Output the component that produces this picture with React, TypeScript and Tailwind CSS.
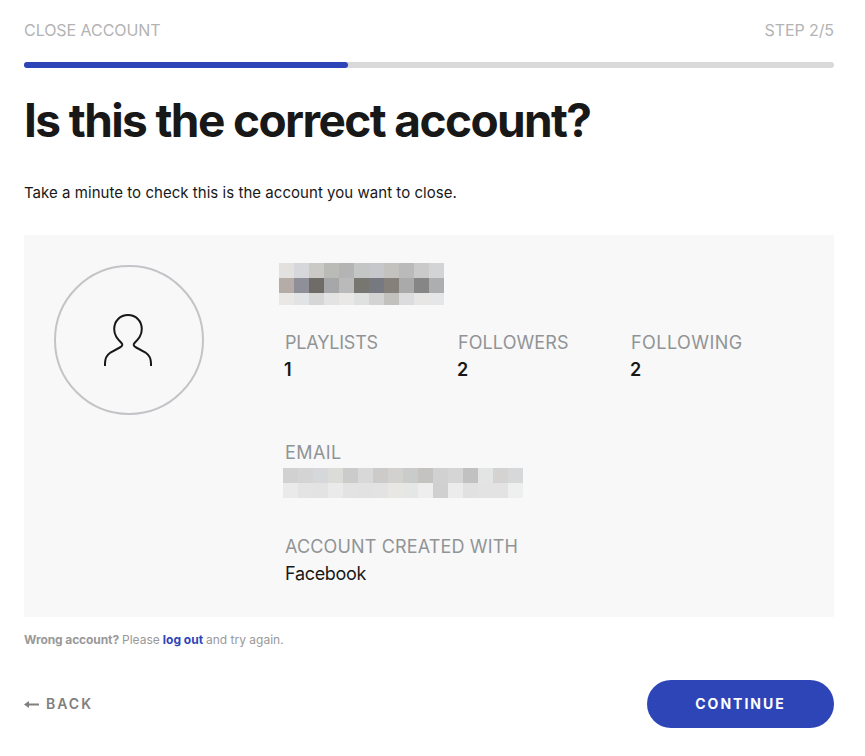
const NAME_ROWS: { height: string; colors: string[] }[] = [
  {
    height: "h-[15px]",
    colors: ["#e2e1df", "#d6d7da", "#cac9c6", "#babab7", "#b4b4b4", "#c4c6c5", "#c5c7ca", "#c3c2bf", "#bababa", "#cacaca", "#d2d4d6"],
  },
  {
    height: "h-[15px]",
    colors: ["#b5aba7", "#8f8f99", "#6f6c67", "#a6a7a9", "#bababa", "#777670", "#767980", "#86807b", "#aaaaaa", "#868686", "#adaeb0"],
  },
  {
    height: "h-[12px]",
    colors: ["#eae8e6", "#e1e3e4", "#d6d6d6", "#e3e3e3", "#eae8e6", "#dfe1e0", "#d3d3d3", "#c3c1be", "#dcdcde", "#e8e6e4", "#e4e6e8"],
  },
];

const EMAIL_ROWS: { height: string; colors: string[] }[] = [
  {
    height: "h-[15px]",
    colors: ["#d1d1d1", "#d4d4d4", "#d6d7da", "#dbdbd8", "#cbcbcb", "#d8d8d8", "#cdcbc9", "#d2d1ce", "#c9cccb", "#c4c3c0", "#d1d1d1", "#d5d5d5", "#c1c1c1", "#e2e5e4", "#d5d3d1", "#d6d8da"],
  },
  {
    height: "h-[15px]",
    colors: ["#eaeaea", "#e4e4e4", "#e3e3e3", "#eaeaea", "#e3e3e3", "#e2e2e2", "#e3e3e3", "#e9e7e4", "#e4e7e6", "#eeeeee", "#d0d0d0", "#ececec", "#e1e1e1", "#e3e3e3", "#e3e3e3", "#eef0ef"],
  },
];

function Mosaic({ rows }: { rows: { height: string; colors: string[] }[] }) {
  return (
    <div className="flex flex-col">
      {rows.map((row, r) => (
        <div key={r} className={`flex ${row.height}`}>
          {row.colors.map((c, i) => (
            <div key={i} className="w-[15px]" style={{ backgroundColor: c }} />
          ))}
        </div>
      ))}
    </div>
  );
}

function Stat({ label, value, spacing }: { label: string; value: string; spacing: string }) {
  return (
    <div className="w-[173px]">
      <div className={`text-[#919496] ${spacing}`}>{label}</div>
      <div className="-ml-px font-semibold">{value}</div>
    </div>
  );
}

export default function App() {
  return (
    <main className="min-h-[756px] w-[865px] bg-white pt-[18px] pr-[31px] pl-6 font-[Inter,sans-serif] text-[#181818]">
      <header className="flex justify-between text-base leading-[25px] text-[#b3b3b3]">
        <span className="tracking-[-0.05px]">CLOSE ACCOUNT</span>
        <span className="tracking-[-0.1px]">STEP 2/5</span>
      </header>
      <div className="mt-[19px] h-1.5 rounded-full bg-[#d9d9d9]">
        <div className="h-1.5 w-2/5 rounded-full bg-[#2e45b8]" />
      </div>

      <h1 className="mt-[22px] text-[46px] leading-[60px] font-bold tracking-[-1.6px] whitespace-nowrap">
        Is this the correct account?
      </h1>
      <p className="mt-[31px] text-[15px] leading-6 tracking-[0.04px] whitespace-nowrap">
        Take a minute to check this is the account you want to close.
      </p>

      <section className="mt-[30px] flex h-[382px] bg-[#f8f8f8] pt-7 pl-[30px]">
        <div className="mt-0.5 flex size-[150px] shrink-0 items-center justify-center rounded-full border-2 border-[#c4c4c8]">
          <svg width="48" height="54" viewBox="0 0 48 54" fill="none" stroke="#181818" strokeWidth="2" className="-ml-0.5">
            <path d="M1 53v-2.500C1 45.500 2.800 42 6.500 39.500L15.800 34.500C18.600 33 19 31.600 17.300 29.800C13.600 25.900 10.200 22.500 10.200 16C10.200 7.800 16.300 2 24 2S37.800 7.800 37.800 16C37.800 22.500 34.400 25.900 30.700 29.800C29 31.600 29.400 33 32.200 34.500L41.500 39.500C45.200 42 47 45.500 47 50.500V53" />
          </svg>
        </div>
        <div className="ml-[81px] text-lg leading-[27px]">
          <div className="-ml-1.5">
            <Mosaic rows={NAME_ROWS} />
          </div>
          <div className="mt-6 flex">
            <Stat label="PLAYLISTS" value="1" spacing="tracking-[-0.2px]" />
            <Stat label="FOLLOWERS" value="2" spacing="tracking-[0.1px]" />
            <Stat label="FOLLOWING" value="2" spacing="tracking-[0.45px]" />
          </div>
          <div className="mt-14 tracking-[0.4px] text-[#919496]">EMAIL</div>
          <div className="mt-0.5 -ml-0.5">
            <Mosaic rows={EMAIL_ROWS} />
          </div>
          <div className="mt-[35px] tracking-[0.15px] text-[#919496]">ACCOUNT CREATED WITH</div>
          <div className="tracking-[-0.3px]">Facebook</div>
        </div>
      </section>

      <p className="mt-[14px] flex gap-[3px] text-xs leading-[18px] text-[#999]">
        <span className="font-bold tracking-[-0.1px]">Wrong account?</span>
        <span>Please</span>
        <a className="font-bold text-[#2e45b8]">log out</a>
        <span>and try again.</span>
      </p>

      <footer className="mt-[31px] flex items-center justify-between text-sm">
        <a className="flex items-center gap-[7px] font-semibold tracking-[2px] text-[#7f7f7f]">
          <svg width="15" height="8" viewBox="0 0 15 8" fill="none">
            <path d="M3 4.500h12" stroke="#7f7f7f" strokeWidth="2" />
            <path d="M0 4.500l5-3.500v7z" fill="#7f7f7f" />
          </svg>
          BACK
        </a>
        <button className="h-12 w-[187px] rounded-full bg-[#2e45b8] font-bold tracking-[2px] text-white">CONTINUE</button>
      </footer>
    </main>
  );
}
